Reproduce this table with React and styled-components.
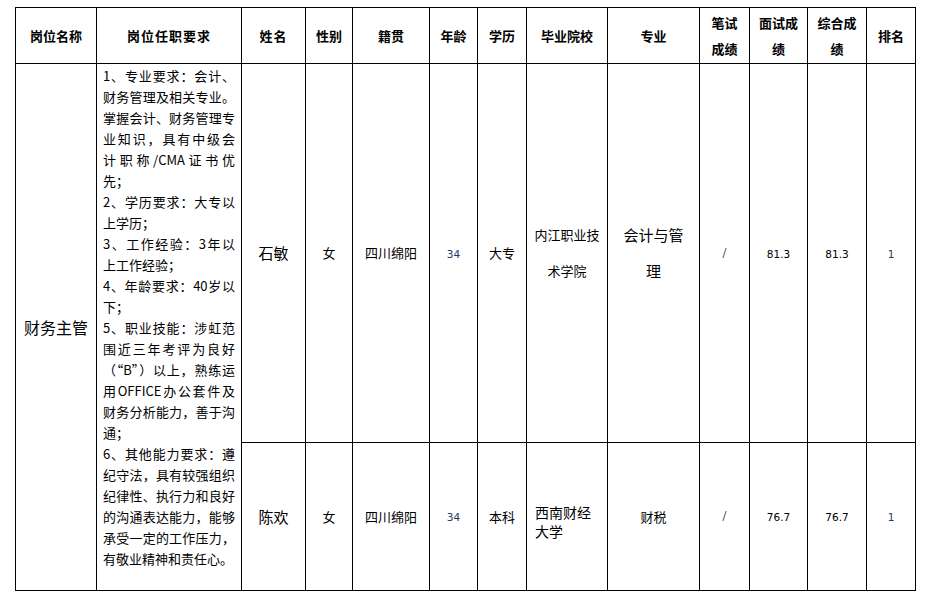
import React from 'react';
import styled, { createGlobalStyle } from 'styled-components';

const GlobalStyle = createGlobalStyle`
    html, body {
        margin: 0;
        padding: 0;
        background: #fff;
    }
    body {
        font-family: "Noto Sans CJK SC", "Liberation Sans", sans-serif;
        color: #000;
    }
`;

const StyledPageDiv = styled.div`
    padding: 7px 0 0 15px;
`;
const StyledTable = styled.table`
    border-collapse: collapse;
    table-layout: fixed;
    width: 900px;
    td, th {
        border: 1px solid #000;
    }
`;
const StyledHeadRow = styled.tr`
    height: 56px;
`;
const StyledBodyRow = styled.tr`
    height: ${(props) => props.$height}px;
`;
const StyledHeadCell = styled.th`
    padding: 0 4px;
    font-size: 13px;
    font-weight: 700;
    line-height: 26px;
    text-align: center;
    vertical-align: middle;
    letter-spacing: ${(props) => props.$spacing || 0}px;
`;
const StyledCell = styled.td`
    padding: ${(props) => props.$pad || '0 4px'};
    font-size: ${(props) => props.$size || 13}px;
    line-height: ${(props) => props.$lh || 20}px;
    text-align: ${(props) => props.$align || 'center'};
    vertical-align: middle;
`;
const StyledReqCell = styled.td`
    padding: 1px 6px 0 6px;
    vertical-align: top;
    font-size: 13px;
    line-height: 21px;
`;
const StyledReqLine = styled.div`
    text-align: ${(props) => (props.$full ? 'justify' : 'left')};
    text-align-last: ${(props) => (props.$full ? 'justify' : 'left')};
    white-space: nowrap;
`;
const StyledNum = styled.span`
    font-family: "DejaVu Sans", "Liberation Sans", sans-serif;
    font-size: 10.5px;
    color: ${(props) => props.$color || '#000'};
`;
const StyledSlash = styled.span`
    font-family: "Liberation Serif", serif;
    font-size: 14px;
`;

const widths = [81, 145, 64, 47, 77, 48, 49, 81, 92, 50, 58, 59, 49];

const reqLines = [
    ['1、专业要求：会计、', true],
    ['财务管理及相关专业。', true],
    ['掌握会计、财务管理专', true],
    ['业知识，具有中级会', true],
    ['计职称/CMA证书优', true],
    ['先；', false],
    ['2、学历要求：大专以', true],
    ['上学历；', false],
    ['3、工作经验：3年以', true],
    ['上工作经验；', false],
    ['4、年龄要求：40岁以', true],
    ['下；', false],
    ['5、职业技能：涉虹范', true],
    ['围近三年考评为良好', true],
    ['（“B”）以上，熟练运', true],
    ['用OFFICE办公套件及', true],
    ['财务分析能力，善于沟', true],
    ['通；', false],
    ['6、其他能力要求：遵', true],
    ['纪守法，具有较强组织', true],
    ['纪律性、执行力和良好', true],
    ['的沟通表达能力，能够', true],
    ['承受一定的工作压力，', true],
    ['有敬业精神和责任心。', false],
];

const App = () => {
    return (
        <StyledPageDiv>
            <GlobalStyle />
            <StyledTable>
                <colgroup>
                    {widths.map((w, i) => (
                        <col key={i} style={{ width: w }} />
                    ))}
                </colgroup>
                <tbody>
                    <StyledHeadRow>
                        <StyledHeadCell>岗位名称</StyledHeadCell>
                        <StyledHeadCell $spacing={1}>岗位任职要求</StyledHeadCell>
                        <StyledHeadCell $spacing={1}>姓名</StyledHeadCell>
                        <StyledHeadCell>性别</StyledHeadCell>
                        <StyledHeadCell>籍贯</StyledHeadCell>
                        <StyledHeadCell>年龄</StyledHeadCell>
                        <StyledHeadCell>学历</StyledHeadCell>
                        <StyledHeadCell>毕业院校</StyledHeadCell>
                        <StyledHeadCell>专业</StyledHeadCell>
                        <StyledHeadCell>笔试<br />成绩</StyledHeadCell>
                        <StyledHeadCell>面试成<br />绩</StyledHeadCell>
                        <StyledHeadCell>综合成<br />绩</StyledHeadCell>
                        <StyledHeadCell>排名</StyledHeadCell>
                    </StyledHeadRow>
                    <StyledBodyRow $height={379}>
                        <StyledCell rowSpan={2} $size={16}>财务主管</StyledCell>
                        <StyledReqCell rowSpan={2}>
                            {reqLines.map(([text, full], i) => (
                                <StyledReqLine key={i} $full={full}>{text}</StyledReqLine>
                            ))}
                        </StyledReqCell>
                        <StyledCell $size={15}>石敏</StyledCell>
                        <StyledCell>女</StyledCell>
                        <StyledCell>四川绵阳</StyledCell>
                        <StyledCell><StyledNum $color="#1f3864">34</StyledNum></StyledCell>
                        <StyledCell>大专</StyledCell>
                        <StyledCell $lh={36}>内江职业技<br />术学院</StyledCell>
                        <StyledCell $size={15} $lh={36}>会计与管<br />理</StyledCell>
                        <StyledCell><StyledSlash>/</StyledSlash></StyledCell>
                        <StyledCell><StyledNum>81.3</StyledNum></StyledCell>
                        <StyledCell><StyledNum>81.3</StyledNum></StyledCell>
                        <StyledCell><StyledNum $color="#1f3864">1</StyledNum></StyledCell>
                    </StyledBodyRow>
                    <StyledBodyRow $height={148}>
                        <StyledCell $size={15}>陈欢</StyledCell>
                        <StyledCell>女</StyledCell>
                        <StyledCell>四川绵阳</StyledCell>
                        <StyledCell><StyledNum $color="#1f3864">34</StyledNum></StyledCell>
                        <StyledCell>本科</StyledCell>
                        <StyledCell $size={14} $lh={19} $align="left" $pad="10px 6px 0 8px">西南财经<br />大学</StyledCell>
                        <StyledCell>财税</StyledCell>
                        <StyledCell><StyledSlash>/</StyledSlash></StyledCell>
                        <StyledCell><StyledNum>76.7</StyledNum></StyledCell>
                        <StyledCell><StyledNum>76.7</StyledNum></StyledCell>
                        <StyledCell><StyledNum $color="#1f3864">1</StyledNum></StyledCell>
                    </StyledBodyRow>
                </tbody>
            </StyledTable>
        </StyledPageDiv>
    );
};

export default App;
